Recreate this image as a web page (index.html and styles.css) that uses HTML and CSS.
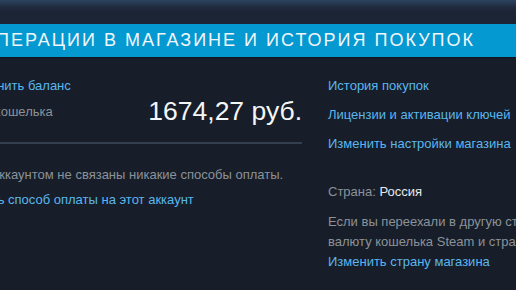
FILE: index.html
```html
<!DOCTYPE html>
<html lang="ru">
<head>
  <meta charset="UTF-8" />
  <title>Операции в магазине и история покупок</title>
  <link rel="stylesheet" href="styles.css">
</head>
<body>

<div class="page">
  <div class="page-top"></div>

  <h2 class="page-title">Операции в магазине и история покупок</h2>

  <div class="account-columns">
    <div class="left-col">
      <a class="link wallet-add" href="#">Пополнить баланс</a>
      <div class="wallet-row">
        <span class="muted">Баланс кошелька</span>
        <span class="wallet-amount">1674,27 руб.</span>
      </div>
      <div class="divider"></div>
      <p class="muted no-payment">С этим аккаунтом не связаны никакие способы оплаты.</p>
      <a class="link" href="#">Добавить способ оплаты на этот аккаунт</a>
    </div>

    <div class="right-col">
      <ul class="store-links">
        <li><a class="link" href="#">История покупок</a></li>
        <li><a class="link" href="#">Лицензии и активации ключей</a></li>
        <li><a class="link" href="#">Изменить настройки магазина</a></li>
      </ul>
      <div class="country">
        <span class="muted">Страна:</span> <span class="country-name">Россия</span>
      </div>
      <p class="muted country-note">Если вы переехали в другую страну, вы можете обновить валюту кошелька Steam и страну магазина.</p>
      <a class="link" href="#">Изменить страну магазина</a>
    </div>
  </div>
</div>

</body>
</html>
```

FILE: styles.css
```css
html, body {
  margin: 0;
  padding: 0;
  height: 100%;
  background: #171e29;
  font-family: "Liberation Sans", Arial, sans-serif;
  font-size: 13px;
  overflow: hidden;
}

.page {
  margin-left: -53px;
  width: 760px;
}

.page-top {
  height: 24px;
  background: linear-gradient(to bottom, #2c4361 0px, #1f2b3d 7px, #1b2536 12px, #1b2434 24px);
  margin-left: 53px;
}

.page-title {
  margin: 0 0 0 33px;
  height: 33px;
  line-height: 33px;
  background: #0499d1;
  border-bottom: 1px solid #0f1620;
  color: #f2f6f9;
  font-weight: normal;
  font-size: 18px;
  letter-spacing: 2px;
  text-transform: uppercase;
  white-space: nowrap;
}

.account-columns {
  display: flex;
  gap: 26px;
  padding-top: 19px;
}

.left-col {
  width: 355px;
}

.right-col {
  width: 300px;
  white-space: nowrap;
}

.link {
  color: #5bb6ee;
  text-decoration: none;
  display: block;
  line-height: 18px;
}

.muted {
  color: #8b929a;
}

.wallet-add {
  padding-left: 12px;
}

.wallet-row {
  display: flex;
  justify-content: space-between;
  align-items: center;
  height: 32px;
}

.wallet-amount {
  color: #f4f6f8;
  font-size: 26.5px;
  line-height: 32px;
}

.divider {
  height: 2px;
  background: #333f4e;
  margin-top: 15px;
}

.no-payment {
  margin: 22px 0 7px;
  line-height: 18px;
}

.store-links {
  list-style: none;
  margin: 0;
  padding: 0;
}

.store-links li {
  margin-bottom: 11px;
}

.country {
  margin-top: 30px;
  line-height: 18px;
}

.country-name {
  color: #e6e9ec;
}

.country-note {
  margin: 11px 0 1px;
  line-height: 20px;
  white-space: normal;
  width: 380px;
}
```
